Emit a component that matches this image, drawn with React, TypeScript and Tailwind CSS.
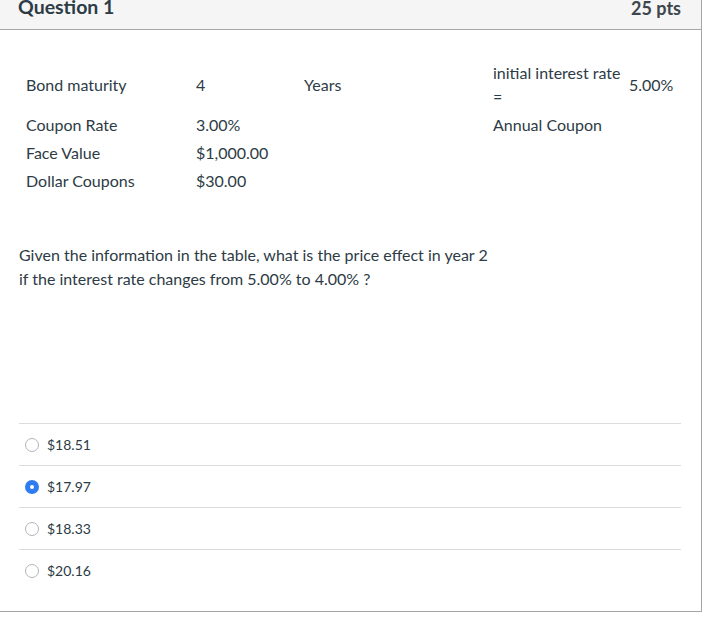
import React from "react";

const rows = [
  ["Coupon Rate", "3.00%"],
  ["Face Value", "$1,000.00"],
  ["Dollar Coupons", "$30.00"],
];

const answers = [
  { label: "$18.51", checked: false },
  { label: "$17.97", checked: true },
  { label: "$18.33", checked: false },
  { label: "$20.16", checked: false },
];

function Radio({ checked }: { checked: boolean }) {
  if (checked) {
    return (
      <span className="flex h-[14px] w-[14px] items-center justify-center rounded-full bg-[#2f7cf0]">
        <span className="h-[4px] w-[4px] rounded-full bg-white" />
      </span>
    );
  }
  return <span className="h-[14px] w-[14px] rounded-full border border-[#b5b5b5] bg-white" />;
}

export default function App() {
  return (
    <div
      className="w-[702px] h-[612px] border-r border-b border-[#a5a5a5] bg-white text-[#2d3b45] overflow-hidden"
      style={{ fontFamily: "Lato, 'Noto Sans', sans-serif" }}
    >
      <div className="h-[30px] border-b border-[#a5a5a5] bg-[#f5f5f5] flex items-start justify-between pl-[18px] pr-[20px]">
        <div className="-mt-[4px] text-[19.5px] leading-[22px] font-bold">Question 1</div>
        <div className="-mt-[3px] text-[18px] leading-[22px] font-bold text-[#3d464d]">25 pts</div>
      </div>

      <div className="pt-[31px] pl-[26px] text-[16px]">
        <div className="flex items-center h-[48px]">
          <div className="w-[170px]">Bond maturity</div>
          <div className="w-[108px]">4</div>
          <div className="w-[189px]">Years</div>
          <div className="w-[136px] leading-[24px]">
            <div>initial interest rate</div>
            <div>=</div>
          </div>
          <div>5.00%</div>
        </div>
        <div className="mt-[2px] flex items-center h-[28px]">
          <div className="w-[170px]">{rows[0][0]}</div>
          <div className="w-[297px]">{rows[0][1]}</div>
          <div>Annual Coupon</div>
        </div>
        {rows.slice(1).map((r) => (
          <div key={r[0]} className="flex items-center h-[28px]">
            <div className="w-[170px]">{r[0]}</div>
            <div>{r[1]}</div>
          </div>
        ))}
      </div>

      <div className="mt-[48px] pl-[19px] text-[16px] leading-[24px]">
        <div>Given the information in the table, what is the price effect in year 2</div>
        <div>if the interest rate changes from 5.00% to 4.00% ?</div>
      </div>

      <div className="mt-[132px] mx-[19px] w-[662px]">
        {answers.map((a) => (
          <div key={a.label} className="h-[42px] border-t border-[#dcdcdc] flex items-center pl-[6px] gap-[8px] text-[14px]">
            <Radio checked={a.checked} />
            <span>{a.label}</span>
          </div>
        ))}
      </div>
    </div>
  );
}
